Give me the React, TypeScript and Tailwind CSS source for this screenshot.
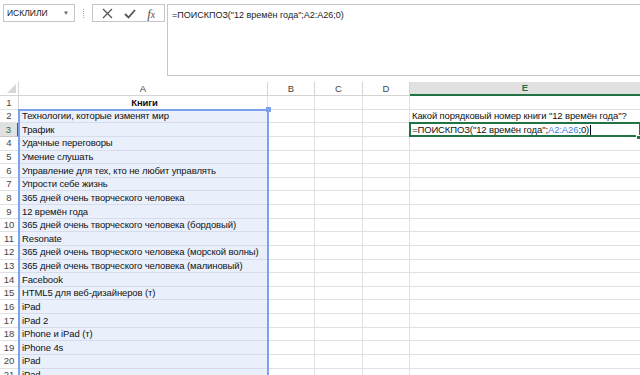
import React from "react";

const books = [
  "Технологии, которые изменят мир",
  "Трафик",
  "Удачные переговоры",
  "Умение слушать",
  "Управление для тех, кто не любит управлять",
  "Упрости себе жизнь",
  "365 дней очень творческого человека",
  "12 времён года",
  "365 дней очень творческого человека (бордовый)",
  "Resonate",
  "365 дней очень творческого человека (морской волны)",
  "365 дней очень творческого человека (малиновый)",
  "Facebook",
  "HTML5 для веб-дизайнеров (т)",
  "iPad",
  "iPad 2",
  "iPhone и iPad (т)",
  "iPhone 4s",
  "iPad",
  "iPad",
];

const font = { fontFamily: '"Liberation Sans", Arial, sans-serif' };

function Row({ n }: { n: number }) {
  const isSel = n === 3;
  const aText = n === 1 ? "Книги" : books[n - 2] ?? "";
  const inRange = n >= 2;
  return (
    <div className="flex h-[13.63px] shrink-0">
      <div
        className={
          "w-[19px] shrink-0 flex items-center justify-center text-[9.5px] leading-none border-b " +
          (isSel
            ? "bg-[#e1e1e1] text-[#217346] border-r-2 border-r-[#217346] border-b-[#c8c8c8]"
            : "text-[#444] border-r border-r-[#d4d4d4] border-b-[#e1e1e1]")
        }
      >
        {n}
      </div>
      <div
        className={
          "w-[249px] shrink-0 flex items-center pl-[3px] text-[9.5px] tracking-[-0.12px] leading-none text-[#111] border-b border-r overflow-hidden whitespace-nowrap " +
          (inRange ? "bg-[#eaf0fb] border-[#d6dcea] " : "border-[#e1e1e1] ") +
          (n === 1 ? "justify-center font-bold" : "")
        }
      >
        {aText}
      </div>
      <div className="w-[47px] shrink-0 border-b border-r border-[#e1e1e1]" />
      <div className="w-[48px] shrink-0 border-b border-r border-[#e1e1e1]" />
      <div className="w-[47px] shrink-0 border-b border-r border-[#e1e1e1]" />
      <div className="flex-1 flex items-center pl-[2px] text-[9.5px] tracking-[-0.12px] leading-none text-[#111] border-b border-[#e1e1e1] whitespace-nowrap overflow-visible">
        {n === 2 && <span>Какой порядковый номер книги "12 времён года"?</span>}
        {n === 3 && (
          <span className="flex items-center">
            <span>
              =ПОИСКПОЗ("12 времён года";<span className="text-[#4a7de0]">A2:A26</span>;0)
            </span>
            <span className="inline-block w-px h-[10px] bg-black ml-[1px]" />
          </span>
        )}
      </div>
    </div>
  );
}

export default function App() {
  const rows = Array.from({ length: 21 }, (_, i) => i + 1);
  return (
    <div className="w-[640px] h-[375px] overflow-hidden bg-white relative flex flex-col" style={font}>
      {/* top bar */}
      <div className="h-[82px] shrink-0 flex items-start pt-[4px]">
        <div className="ml-[3px] w-[72px] h-[18px] border border-[#c6c6c6] flex items-center pl-[3px] pr-[5px] text-[8.5px] text-[#222]">
          <span className="flex-1">ИСКЛИЛИ</span>
          <span className="text-[6px] text-[#666]">▼</span>
        </div>
        <div className="w-[17px] h-[18px] flex items-center justify-center">
          <div className="h-[9px] border-l border-dotted border-[#aaa]" />
        </div>
        <div className="w-[73px] h-[18px] border border-[#c6c6c6] flex items-center justify-around px-[3px] text-[#555]">
          <svg width="11" height="11" viewBox="0 0 11 11">
            <path d="M1 1 L10 10 M10 1 L1 10" stroke="#555" strokeWidth="1.3" fill="none" />
          </svg>
          <svg width="12" height="11" viewBox="0 0 12 11">
            <path d="M1 6 L4.5 9.5 L11 2" stroke="#555" strokeWidth="1.8" fill="none" />
          </svg>
          <span className="italic text-[13px] leading-none text-[#555]" style={{ fontFamily: '"Liberation Serif", serif' }}>
            f<span className="text-[10px]">x</span>
          </span>
        </div>
        <div className="ml-[2px] flex-1 h-[72px] border-t border-b border-l border-[#c6c6c6] pl-[4px] pt-[4px] text-[9px] text-[#222] leading-[12px]">
          =ПОИСКПОЗ("12 времён года";A2:A26;0)
        </div>
      </div>
      {/* column headers */}
      <div className="flex h-[14px] shrink-0 text-[9.5px] text-[#444] leading-none">
        <div className="w-[19px] shrink-0 border-r border-b border-[#d4d4d4] relative">
          <svg className="absolute right-[2px] bottom-[2px]" width="9" height="9" viewBox="0 0 9 9">
            <path d="M9 0 L9 9 L0 9 Z" fill="#d7d7d7" />
          </svg>
        </div>
        <div className="w-[249px] shrink-0 flex items-center justify-center border-r border-b border-[#d4d4d4]">A</div>
        <div className="w-[47px] shrink-0 flex items-center justify-center border-r border-b border-[#d4d4d4]">B</div>
        <div className="w-[48px] shrink-0 flex items-center justify-center border-r border-b border-[#d4d4d4]">C</div>
        <div className="w-[47px] shrink-0 flex items-center justify-center border-r border-b border-[#d4d4d4]">D</div>
        <div className="flex-1 flex items-center justify-center bg-[#e1e1e1] border-b-2 border-[#217346] text-[#217346] font-bold">E</div>
      </div>
      {/* grid */}
      <div className="relative flex flex-col">
        {rows.map((n) => (
          <Row key={n} n={n} />
        ))}
        {/* selection range A2:A26 */}
        <div className="absolute left-[18px] top-[13px] w-[251px] h-[400px] border-2 border-[#7ba2ea] border-b-0 pointer-events-none" />
        <div className="absolute left-[266px] top-[11px] w-[5px] h-[5px] bg-[#7ba2ea]" />
        {/* active cell E3 */}
        <div className="absolute left-[409px] top-[26px] w-[232px] h-[15px] border-2 border-[#217346]" />
        <div className="absolute left-[636px] top-[39px] w-[5px] h-[5px] bg-[#217346] border border-white" />
      </div>
    </div>
  );
}
